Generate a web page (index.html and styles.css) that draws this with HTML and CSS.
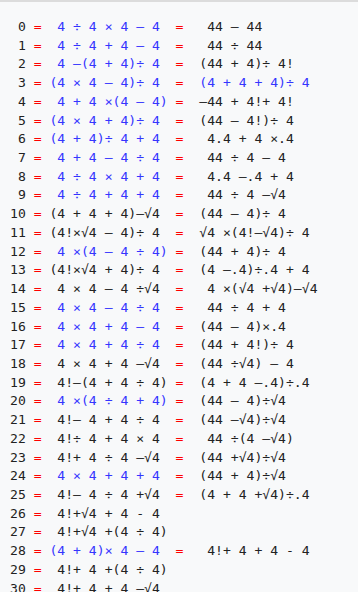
FILE: index.html
```html
<!DOCTYPE html>
<html lang="en">
  <head>
    <meta charset="UTF-8" />
    <meta name="viewport" content="width=device-width, initial-scale=1.0" />
    <title>Four Fours</title>
    <link rel="stylesheet" href="styles.css">
  </head>
  <body>
    <div class="fours">
      <div class="row"><span class="n"> 0</span> <span class="eq">=</span> <span class="b"> 4 ÷ 4 × 4 – 4 </span> <span class="eq">=</span>  <span> 44 – 44</span></div>
      <div class="row"><span class="n"> 1</span> <span class="eq">=</span> <span class="b"> 4 ÷ 4 + 4 – 4 </span> <span class="eq">=</span>  <span> 44 ÷ 44</span></div>
      <div class="row"><span class="n"> 2</span> <span class="eq">=</span> <span class="b"> 4 –(4 + 4)÷ 4 </span> <span class="eq">=</span>  <span>(44 + 4)÷ 4!</span></div>
      <div class="row"><span class="n"> 3</span> <span class="eq">=</span> <span class="b">(4 × 4 – 4)÷ 4 </span> <span class="eq">=</span>  <span class="b">(4 + 4 + 4)÷ 4</span></div>
      <div class="row"><span class="n"> 4</span> <span class="eq">=</span> <span class="b"> 4 + 4 ×(4 – 4)</span> <span class="eq">=</span>  <span>–44 + 4!+ 4!</span></div>
      <div class="row"><span class="n"> 5</span> <span class="eq">=</span> <span class="b">(4 × 4 + 4)÷ 4 </span> <span class="eq">=</span>  <span>(44 – 4!)÷ 4</span></div>
      <div class="row"><span class="n"> 6</span> <span class="eq">=</span> <span class="b">(4 + 4)÷ 4 + 4 </span> <span class="eq">=</span>  <span> 4.4 + 4 ×.4</span></div>
      <div class="row"><span class="n"> 7</span> <span class="eq">=</span> <span class="b"> 4 + 4 – 4 ÷ 4 </span> <span class="eq">=</span>  <span> 44 ÷ 4 – 4</span></div>
      <div class="row"><span class="n"> 8</span> <span class="eq">=</span> <span class="b"> 4 ÷ 4 × 4 + 4 </span> <span class="eq">=</span>  <span> 4.4 –.4 + 4</span></div>
      <div class="row"><span class="n"> 9</span> <span class="eq">=</span> <span class="b"> 4 ÷ 4 + 4 + 4 </span> <span class="eq">=</span>  <span> 44 ÷ 4 –√4</span></div>
      <div class="row"><span class="n">10</span> <span class="eq">=</span> <span>(4 + 4 + 4)–√4 </span> <span class="eq">=</span>  <span>(44 – 4)÷ 4</span></div>
      <div class="row"><span class="n">11</span> <span class="eq">=</span> <span>(4!×√4 – 4)÷ 4 </span> <span class="eq">=</span>  <span>√4 ×(4!–√4)÷ 4</span></div>
      <div class="row"><span class="n">12</span> <span class="eq">=</span> <span class="b"> 4 ×(4 – 4 ÷ 4)</span> <span class="eq">=</span>  <span>(44 + 4)÷ 4</span></div>
      <div class="row"><span class="n">13</span> <span class="eq">=</span> <span>(4!×√4 + 4)÷ 4 </span> <span class="eq">=</span>  <span>(4 –.4)÷.4 + 4</span></div>
      <div class="row"><span class="n">14</span> <span class="eq">=</span> <span> 4 × 4 – 4 ÷√4 </span> <span class="eq">=</span>  <span> 4 ×(√4 +√4)–√4</span></div>
      <div class="row"><span class="n">15</span> <span class="eq">=</span> <span class="b"> 4 × 4 – 4 ÷ 4 </span> <span class="eq">=</span>  <span> 44 ÷ 4 + 4</span></div>
      <div class="row"><span class="n">16</span> <span class="eq">=</span> <span class="b"> 4 × 4 + 4 – 4 </span> <span class="eq">=</span>  <span>(44 – 4)×.4</span></div>
      <div class="row"><span class="n">17</span> <span class="eq">=</span> <span class="b"> 4 × 4 + 4 ÷ 4 </span> <span class="eq">=</span>  <span>(44 + 4!)÷ 4</span></div>
      <div class="row"><span class="n">18</span> <span class="eq">=</span> <span> 4 × 4 + 4 –√4 </span> <span class="eq">=</span>  <span>(44 ÷√4) – 4</span></div>
      <div class="row"><span class="n">19</span> <span class="eq">=</span> <span> 4!–(4 + 4 ÷ 4)</span> <span class="eq">=</span>  <span>(4 + 4 –.4)÷.4</span></div>
      <div class="row"><span class="n">20</span> <span class="eq">=</span> <span class="b"> 4 ×(4 ÷ 4 + 4)</span> <span class="eq">=</span>  <span>(44 – 4)÷√4</span></div>
      <div class="row"><span class="n">21</span> <span class="eq">=</span> <span> 4!– 4 + 4 ÷ 4 </span> <span class="eq">=</span>  <span>(44 –√4)÷√4</span></div>
      <div class="row"><span class="n">22</span> <span class="eq">=</span> <span> 4!÷ 4 + 4 × 4 </span> <span class="eq">=</span>  <span> 44 ÷(4 –√4)</span></div>
      <div class="row"><span class="n">23</span> <span class="eq">=</span> <span> 4!+ 4 ÷ 4 –√4 </span> <span class="eq">=</span>  <span>(44 +√4)÷√4</span></div>
      <div class="row"><span class="n">24</span> <span class="eq">=</span> <span class="b"> 4 × 4 + 4 + 4 </span> <span class="eq">=</span>  <span>(44 + 4)÷√4</span></div>
      <div class="row"><span class="n">25</span> <span class="eq">=</span> <span> 4!– 4 ÷ 4 +√4 </span> <span class="eq">=</span>  <span>(4 + 4 +√4)÷.4</span></div>
      <div class="row"><span class="n">26</span> <span class="eq">=</span> <span> 4!+√4 + 4 - 4</span></div>
      <div class="row"><span class="n">27</span> <span class="eq">=</span> <span> 4!+√4 +(4 ÷ 4)</span></div>
      <div class="row"><span class="n">28</span> <span class="eq">=</span> <span class="b">(4 + 4)× 4 – 4 </span> <span class="eq">=</span>  <span> 4!+ 4 + 4 - 4</span></div>
      <div class="row"><span class="n">29</span> <span class="eq">=</span> <span> 4!+ 4 +(4 ÷ 4)</span></div>
      <div class="row"><span class="n">30</span> <span class="eq">=</span> <span> 4!+ 4 + 4 –√4</span></div>
    </div>
  </body>
</html>
```

FILE: styles.css
```css
body {
  margin: 0;
  padding: 0;
  background-color: #f8f9fa;
  border-top: 2px solid #dcdcdc;
  font-family: "DejaVu Sans Mono", monospace;
}

.fours {
  padding: 16px 0 0 10px;
  font-size: 13.1px;
  line-height: 18.72px;
  color: #222;
}

.row {
  white-space: pre;
}

.eq {
  color: #f00;
}

.b {
  color: #3535ff;
}
```
